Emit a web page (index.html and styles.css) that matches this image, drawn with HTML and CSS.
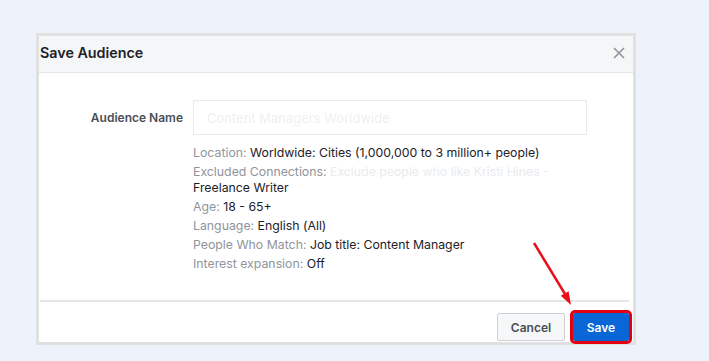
FILE: index.html
```html
<!DOCTYPE html>
<html lang="en">
<head>
    <meta charset="UTF-8">
    <meta name="viewport" content="width=device-width, initial-scale=1.0">
    <title>Save Audience</title>
    <link rel="stylesheet" href="styles.css">
</head>
<body>
    <div class="dialog">
        <div class="dialog-header">
            <h2>Save Audience</h2>
            <svg class="close" width="12" height="12" viewBox="0 0 12 12">
                <path d="M1 1 L11 11 M11 1 L1 11" stroke="#8d949e" stroke-width="1.6" fill="none"/>
            </svg>
        </div>
        <div class="dialog-body">
            <label class="field-label">Audience Name</label>
            <div class="field">
                <div class="name-input"><span>Content Managers Worldwide</span></div>
                <ul class="summary">
                    <li><span class="key">Location:</span> Worldwide: Cities (1,000,000 to 3 million+ people)</li>
                    <li><span class="key">Excluded Connections:</span> <span class="faded">Exclude people who like Kristi Hines -</span> Freelance Writer</li>
                    <li><span class="key">Age:</span> 18 - 65+</li>
                    <li><span class="key">Language:</span> English (All)</li>
                    <li><span class="key">People Who Match:</span> Job title: Content Manager</li>
                    <li><span class="key">Interest expansion:</span> Off</li>
                </ul>
            </div>
        </div>
        <div class="dialog-footer">
            <button class="btn btn-cancel">Cancel</button>
            <button class="btn btn-save">Save</button>
        </div>
        <!-- annotation arrow pointing at save -->
        <svg class="arrow" width="50" height="72" viewBox="0 0 50 72">
            <line x1="6" y1="5" x2="37" y2="56" stroke="#e8101a" stroke-width="2.5"/>
            <polygon points="43,67 32.8,57.8 40.6,53.2" fill="#e8101a"/>
        </svg>
    </div>
</body>
</html>
```

FILE: styles.css
```css
* {
    margin: 0;
    padding: 0;
    box-sizing: border-box;
}
body {
    background: #eef3fb;
    font-family: Inter, "Liberation Sans", Arial, sans-serif;
    padding: 33px 0 0 36px;
}
.dialog {
    position: relative;
    width: 600px;
    border: 3px solid #e0e0e0;
    background: #fff;
}
.dialog-header {
    height: 37px;
    background: #f5f6f7;
    border-bottom: 1px solid #e5e5e5;
    display: flex;
    align-items: center;
    justify-content: space-between;
    padding: 0 8px 0 1px;
}
.dialog-header h2 {
    font-size: 14.3px;
    font-weight: 600;
    color: #1d2129;
    margin-top: -3px;
}
.close {
    margin-top: -3px;
}
.dialog-body {
    display: grid;
    grid-template-columns: 144px 394px;
    column-gap: 10px;
    padding: 27px 0 25px;
}
.field-label {
    text-align: right;
    font-size: 12px;
    font-weight: 600;
    color: #4b4f56;
    line-height: 35px;
}
.name-input {
    height: 35px;
    border: 1px solid #e9eaed;
    padding: 0 13px;
    display: flex;
    align-items: center;
    font-size: 13px;
    color: #eeeff1;
}
.name-input span {
    filter: blur(0.4px);
}
.summary {
    list-style: none;
    margin-top: 10px;
    font-size: 12.3px;
    line-height: 16px;
    color: #1d2129;
    width: 362px;
}
.summary li {
    margin-bottom: 3px;
}
.key {
    color: #90949c;
}
.faded {
    color: #e9ebee;
}
.dialog-footer {
    display: flex;
    justify-content: flex-end;
    gap: 8px;
    margin: 0 4px 0 1px;
    border-top: 2px solid #e5e6e9;
    padding: 11px 0 1px;
}
.btn {
    height: 28px;
    font-family: inherit;
    font-size: 12px;
    font-weight: 600;
    border-radius: 2px;
    cursor: pointer;
}
.btn-cancel {
    width: 68px;
    background: #f6f7f9;
    border: 1px solid #ced0d4;
    color: #4b4f56;
}
.btn-save {
    width: 56px;
    background: #0866d6;
    border: 1px solid #0866d6;
    color: #fff;
    outline: 3px solid #e3000f;
    outline-offset: 0;
}
.arrow {
    position: absolute;
    left: 489px;
    top: 202px;
}
```
